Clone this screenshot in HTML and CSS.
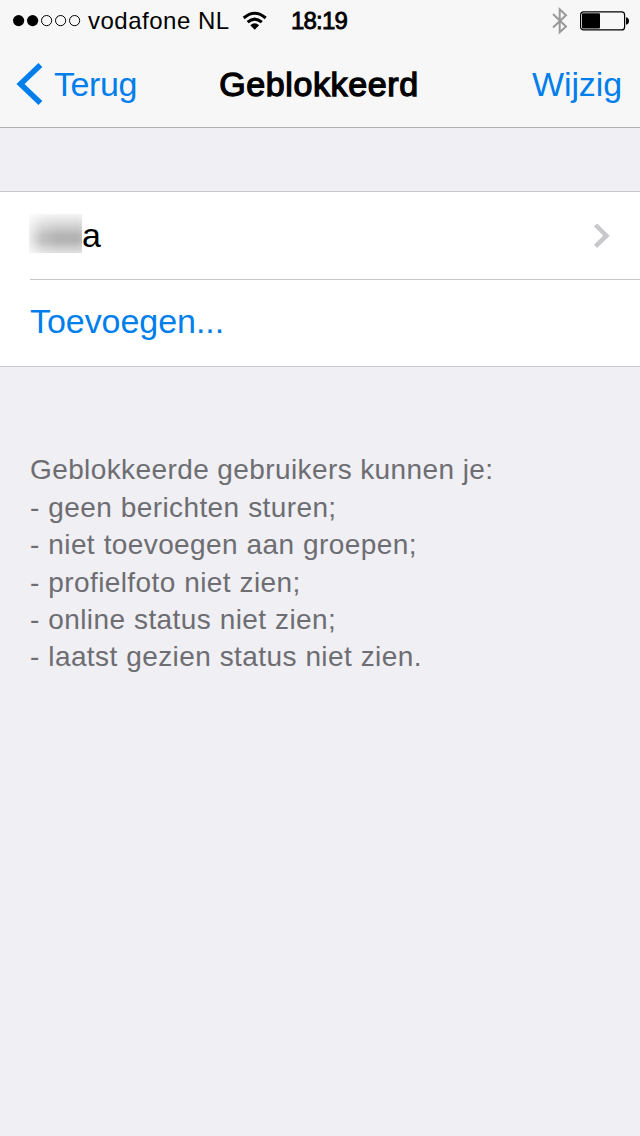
FILE: index.html
```html
<!DOCTYPE html>
<html lang="nl">
<head>
<meta charset="utf-8">
<title>Geblokkeerd</title>
<link rel="stylesheet" href="styles.css">
</head>
<body>
<header class="header">
  <div class="status">
    <svg class="signal" width="68" height="12" viewBox="0 0 68 12">
      <circle cx="5.6" cy="5.6" r="5.6"/><circle cx="19.6" cy="5.6" r="5.6"/>
      <g fill="none" stroke="#000"><circle cx="33.6" cy="5.6" r="5.1"/><circle cx="47.6" cy="5.6" r="5.1"/><circle cx="61.6" cy="5.6" r="5.1"/></g>
    </svg>
    <span class="carrier">vodafone NL</span>
    <svg class="wifi" width="26" height="20" viewBox="0 0 26 20">
      <g fill="none" stroke="#000" stroke-width="3"><path d="M1.7 7Q12.7 -2.6 23.7 7"/><path d="M5.6 11.2Q12.7 5 19.8 11.2"/></g>
      <path d="M8.3 14.2Q12.7 10.4 17.1 14.2L12.7 18.8Z"/>
    </svg>
    <time class="clock">18:19</time>
    <svg class="bluetooth" width="18" height="28" viewBox="0 0 18 28">
      <path d="M2 7L15 19.5L8.7 25.2V2.3L15 8.2L2 20.5" fill="none" stroke="#999" stroke-width="2"/>
    </svg>
    <svg class="battery" width="50" height="20" viewBox="0 0 50 20">
      <rect x=".6" y=".9" width="44" height="18" rx="3" fill="none" stroke="#000" stroke-width="1.2"/>
      <rect x="2" y="2.3" width="18" height="15.2" rx="1"/>
      <path d="M46 6.3Q49 7 49 10T46 13.7Z"/>
    </svg>
  </div>
  <nav class="nav">
    <a class="back"><svg width="28" height="42" viewBox="0 0 28 42"><path d="M24.4 2L4.5 21L24.4 40" fill="none" stroke="#007fec" stroke-width="5.6"/></svg><span class="back-label">Terug</span></a>
    <h1 class="title">Geblokkeerd</h1>
    <a class="edit">Wijzig</a>
  </nav>
</header>
<main>
  <section class="list">
    <div class="row contact"><span class="mask"></span><span class="name">a</span>
      <svg class="chevron" width="18" height="26" viewBox="0 0 18 26"><path d="M2.5 2L13.5 12.7L2.5 23.4" fill="none" stroke="#c7c7cc" stroke-width="4.4"/></svg>
    </div>
    <a class="row add">Toevoegen...</a>
  </section>
  <div class="notes">
    <p>Geblokkeerde gebruikers kunnen je:</p>
    <p class="item">- geen berichten sturen;</p>
    <p class="item">- niet toevoegen aan groepen;</p>
    <p class="item">- profielfoto niet zien;</p>
    <p class="item">- online status niet zien;</p>
    <p class="item">- laatst gezien status niet zien.</p>
  </div>
</main>
</body>
</html>
```
FILE: styles.css
```css
* { box-sizing: border-box; }
body { margin: 0; min-height: 1136px; background: #efeff4; color: #000; font: 34px/1 "Liberation Sans", Arial, sans-serif; overflow: hidden; white-space: nowrap; }
svg { display: block; flex: none; }
.header { height: 128px; background: #f7f7f7; border-bottom: 1px solid #b2b2b2; }
.status { height: 41px; padding: 0 10px 0 13px; display: flex; align-items: center; font-size: 24px; }
.carrier { margin-left: 7px; width: 142px; letter-spacing: .5px; }
.wifi { margin-left: 12px; }
.clock { margin-left: 23px; -webkit-text-stroke: .8px #000; letter-spacing: -.8px; }
.bluetooth { margin-left: auto; }
.battery { margin-left: 11px; }
.nav { height: 86px; padding: 0 18px 0 16px; display: grid; grid-template-columns: 1fr auto 1fr; align-items: center; color: #007fec; }
.back { display: flex; align-items: center; }
.back-label { margin-left: 10px; letter-spacing: -.4px; }
.title { margin: 0; color: #000; font-size: 34px; font-weight: normal; -webkit-text-stroke: 1.3px #000; letter-spacing: .6px; }
.edit { justify-self: end; letter-spacing: -.1px; }
.list { margin-top: 63px; background: #fff; border-top: 1px solid #c8c7cc; border-bottom: 1px solid #c8c7cc; }
.row { height: 87px; margin-left: 30px; display: flex; align-items: center; }
.contact { height: 88px; border-bottom: 1px solid #c8c7cc; padding-right: 29px; }
.mask { width: 53px; height: 39px; margin: -4px 0 0 -1px; background: linear-gradient(to bottom, #fffd, #fff8 22%, #fff0 55%, #fff0 70%, #fff9), linear-gradient(to right, #ededed, #c3c3c3 25%, #b4b4b4 55%, #b4b4b4 90%, #bcbcbc); }
.name { padding-bottom: 2px; letter-spacing: -.5px; }
.chevron { margin-left: auto; }
.add { height: 86px; padding-bottom: 4px; color: #007fec; letter-spacing: -.05px; }
.notes { padding: 84.3px 30px 0; color: #6d6d72; font-size: 28px; line-height: 37.4px; letter-spacing: .4px; }
.notes p { margin: 0; }
.notes .item { word-spacing: .4px; }
```
